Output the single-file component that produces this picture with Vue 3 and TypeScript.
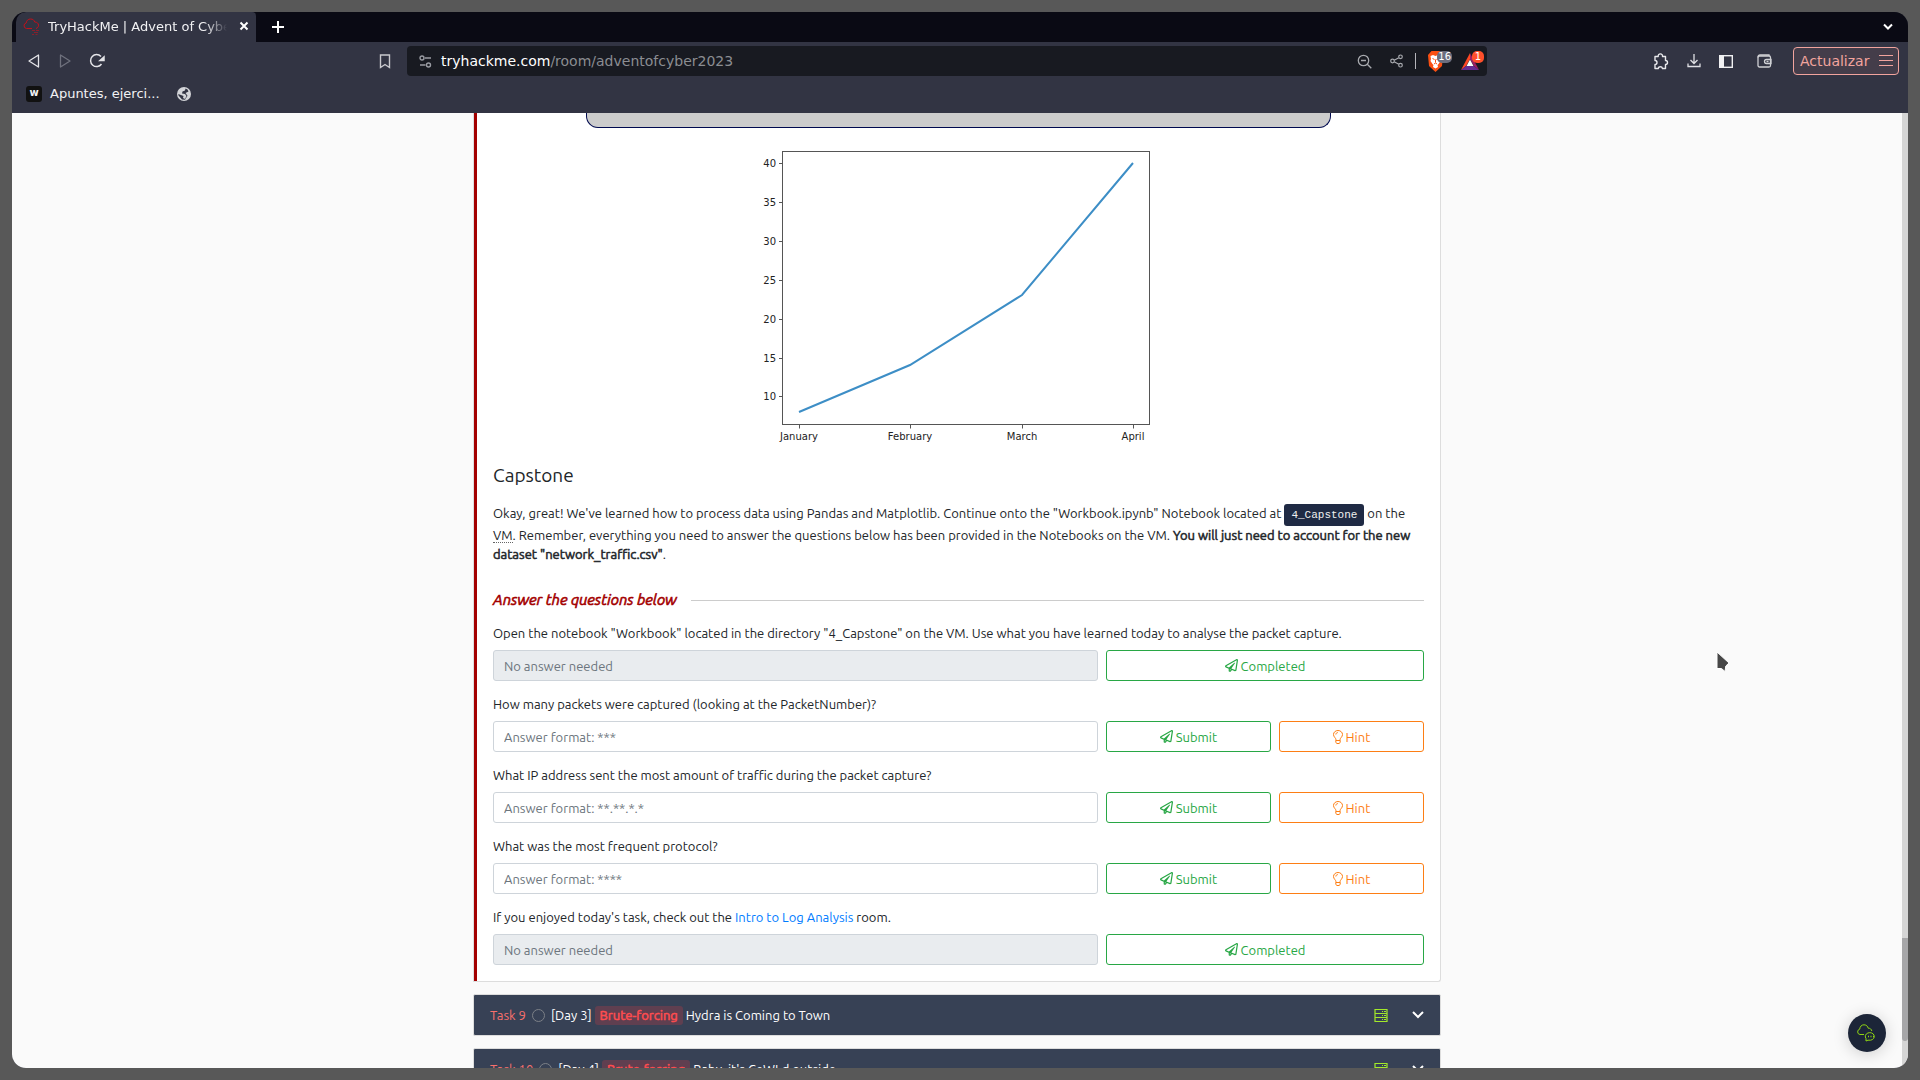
<script setup lang="ts">
interface Question {
  id: string
  text: string
  link?: string
  tail?: string
  placeholder: string
  done: boolean
}

interface Task {
  label: string
  day: string
  tag: string
  title: string
}

interface Point {
  month: string
  value: number
}

const questions: Question[] = [
  {
    id: 'q1',
    text: 'Open the notebook "Workbook" located in the directory "4_Capstone" on the VM. Use what you have learned today to analyse the packet capture.',
    placeholder: 'No answer needed',
    done: true,
  },
  { id: 'q2', text: 'How many packets were captured (looking at the PacketNumber)?', placeholder: 'Answer format: ***', done: false },
  { id: 'q3', text: 'What IP address sent the most amount of traffic during the packet capture?', placeholder: 'Answer format: **.**.*.*', done: false },
  { id: 'q4', text: 'What was the most frequent protocol?', placeholder: 'Answer format: ****', done: false },
  { id: 'q5', text: "If you enjoyed today's task, check out the ", link: 'Intro to Log Analysis', tail: ' room.', placeholder: 'No answer needed', done: true },
]

const tasks: Task[] = [
  { label: 'Task 9', day: '[Day 3]', tag: 'Brute-forcing', title: 'Hydra is Coming to Town' },
  { label: 'Task 10', day: '[Day 4]', tag: 'Brute-forcing', title: "Baby, it's CeWLd outside" },
]

const points: Point[] = [
  { month: 'January', value: 8 },
  { month: 'February', value: 14 },
  { month: 'March', value: 23 },
  { month: 'April', value: 40 },
]
const yTicks = [40, 35, 30, 25, 20, 15, 10]

const xAt = (i: number): number => Math.round(56 + i * 111.3)
const yAt = (v: number): number => Math.round(22 + (40 - v) * 7.78)
const line = points.map((p, i) => `${xAt(i)},${yAt(p.value)}`).join(' ')
</script>

<template>
  <div class="desktop">
    <div class="window">
      <header class="tabstrip">
        <div class="tab">
          <svg class="favicon" width="17" height="17" viewBox="0 0 17 17" fill="none" stroke="#c1121c">
            <path d="M9 10.500H3.500a2.800 2.800 0 0 1-.3-5.500C3.500 2.500 5 1 7.500 1s3.500 1 4.200 3c2.300 0 3.800 1.300 3.800 3.200 0 1.800-1 2.800-2.500 3.300" />
            <path d="M9 12.500h3M13 12.500h3M11 14.500h4M9 16.500h2M12.500 16.500h2" stroke-width="1" opacity=".6" />
          </svg>
          <span class="tab-title">TryHackMe | Advent of Cyber</span>
          <button class="icon-btn" aria-label="Close tab">
            <svg width="10" height="10" viewBox="0 0 10 10" stroke="#fff" stroke-width="2"><path d="M1.500 1.500l7 7M8.500 1.500l-7 7" /></svg>
          </button>
        </div>
        <button class="icon-btn new-tab" aria-label="New tab">
          <svg width="12" height="12" viewBox="0 0 12 12" stroke="#fff" stroke-width="2"><path d="M6 0v12M0 6h12" /></svg>
        </button>
        <button class="icon-btn tab-search" aria-label="Search tabs">
          <svg width="10" height="8" viewBox="0 0 10 8" fill="none" stroke="#fff" stroke-width="2"><path d="M1 1.500l4 4 4-4" /></svg>
        </button>
      </header>

      <nav class="toolbar">
        <div class="nav-left">
          <button class="icon-btn" aria-label="Back">
            <svg width="14" height="16" viewBox="0 0 14 16" fill="none" stroke="#e4e4e8" stroke-width="1.300" stroke-linejoin="round"><path d="M11.500 2v12L2 8z" /></svg>
          </button>
          <button class="icon-btn" aria-label="Forward">
            <svg width="14" height="16" viewBox="0 0 14 16" fill="none" stroke="#6f717d" stroke-width="1.300" stroke-linejoin="round"><path d="M2.500 2v12L12 8z" /></svg>
          </button>
          <button class="icon-btn" aria-label="Reload">
            <svg width="16" height="16" viewBox="0 0 16 16" fill="none" stroke="#e4e4e8" stroke-width="1.500"><path d="M12 3.500A6 6 0 1 0 12.500 11" /><path d="M15 4v3.500h-4z" fill="#e4e4e8" /></svg>
          </button>
          <button class="icon-btn bookmark" aria-label="Bookmark this page">
            <svg width="12" height="15" viewBox="0 0 12 15" fill="none" stroke="#c9c9ce" stroke-width="1.400"><path d="M1.500 1h9v12.500L6 10.500l-4.500 3z" /></svg>
          </button>
        </div>

        <div class="urlbar">
          <svg width="13" height="13" viewBox="0 0 13 13" fill="none" stroke="#9a9ca3" stroke-width="1.400"><circle cx="3" cy="3" r="2" /><path d="M6 3h6M1 10h5.500" /><circle cx="9.500" cy="10" r="2" /></svg>
          <div class="url" role="textbox" aria-label="Address">tryhackme.com<span>/room/adventofcyber2023</span></div>
          <button class="icon-btn" aria-label="Zoom out">
            <svg width="15" height="15" viewBox="0 0 15 15" fill="none" stroke="#a6a8ad" stroke-width="1.300"><circle cx="6.500" cy="6.500" r="5.200" /><path d="M4 6.500h5M10.300 10.300l4 4" /></svg>
          </button>
          <button class="icon-btn" aria-label="Share">
            <svg width="13" height="14" viewBox="0 0 13 14" fill="none" stroke="#a6a8ad" stroke-width="1.200"><circle cx="2.500" cy="7" r="1.800" /><circle cx="10.500" cy="2.800" r="1.800" /><circle cx="10.500" cy="11.200" r="1.800" /><path d="M4.200 6.200l4.600-2.500M4.200 7.800l4.600 2.500" /></svg>
          </button>
          <i class="divider"></i>
          <button class="icon-btn shield" aria-label="Brave Shields">
            <svg width="15" height="21" viewBox="0 0 15 21"><path d="M3.500 0h8L15 4l-1 11-6.500 6L1 15 0 4z" fill="#fb5012" /><path d="M2.500 5l2.500-1 2.500 1 2.500-1 2.500 1-.500 3 .500 2-2 3-1 1 .500 2-2.500 1.500L5 16l.500-2-1-1-2-3 .500-2z" fill="#fff" /><path d="M4.500 7.500l2 1M10.500 7.500l-2 1M7.500 8.500v3M6 13l1.500-1L9 13" stroke="#fb5012" fill="none" /></svg>
            <span class="badge grey">16</span>
          </button>
          <button class="icon-btn rewards" aria-label="Brave Rewards">
            <svg width="18" height="17" viewBox="0 0 18 17"><path d="M9 0v6l-4 7-5 4z" fill="#ff4724" /><path d="M0 17l5-4h8l5 4z" fill="#662d91" /><path d="M9 0v6l4 7 5 4z" fill="#9e1f63" /><path d="M9 6.500L5.500 13h7z" fill="#fff" /></svg>
            <span class="badge red">1</span>
          </button>
        </div>

        <div class="nav-right">
          <button class="icon-btn" aria-label="Extensions">
            <svg width="16" height="17" viewBox="0 0 16 17" fill="none" stroke="#e8e8ec" stroke-width="1.400" stroke-linejoin="round"><path d="M2 3.500h3.200a2.200 2.200 0 1 1 4.300 0h3v4a2 2 0 1 1 0 4v4H9.500a2.200 2.200 0 0 0-4.300 0H2v-4a2 2 0 0 0 0-4z" /></svg>
          </button>
          <button class="icon-btn" aria-label="Downloads">
            <svg width="14" height="14" viewBox="0 0 14 14" fill="none" stroke="#e0e0e5" stroke-width="1.300"><path d="M7 0v9M3.500 6L7 9.500 10.500 6M1 9.500v3h12v-3" /></svg>
          </button>
          <button class="icon-btn" aria-label="Sidebar">
            <svg width="14" height="13" viewBox="0 0 14 13"><rect x=".7" y=".7" width="12.600" height="11.600" fill="none" stroke="#f0f0f2" stroke-width="1.400" /><path d="M0 0h5v13H0z" fill="#f0f0f2" /></svg>
          </button>
          <button class="icon-btn wallet" aria-label="Wallet">
            <svg width="15" height="14" viewBox="0 0 15 14" fill="none" stroke="#cfd0d4" stroke-width="1.300"><rect x="1" y="2" width="12.500" height="11" rx="1.500" /><path d="M1 3.500C1 1.500 2 1 3 1h9v1M14 5.500H9.500a2 2 0 0 0 0 4H14z" /><path d="M9.500 7.500h2" /></svg>
          </button>
          <button class="update">
            <span>Actualizar</span>
            <svg width="14" height="12" viewBox="0 0 14 12" stroke="#f2a49e"><path d="M0 .5h14M0 5.500h14M0 10.500h14" /></svg>
          </button>
        </div>
      </nav>

      <nav class="bookmarks">
        <a href="#" class="bm"><span class="bm-icon">w</span>Apuntes, ejerci...</a>
        <a href="#" class="bm" aria-label="Bookmark">
          <svg width="14" height="14" viewBox="0 0 14 14"><circle cx="7" cy="7" r="7" fill="#d3d4d8" /><path d="M8.500 1.500L8 3.500 5.500 4.500 5 6.500l3 .5 1.500 2L8 12l-2-1 .5-2L1.300 7 1.500 8.500 5 12.500l3 .3 2.500-4L8.500 6l3-1.500L10.500 2.500z" fill="#323443" /></svg>
        </a>
      </nav>

      <div class="viewport">
        <main class="page">
          <article class="card">
            <div class="panel"></div>

            <figure class="chart">
              <svg width="432" height="310" viewBox="0 0 432 310" role="img" aria-label="Line chart by month">
                <rect class="axis" x="39.500" y="10.500" width="367" height="273" />
                <g v-for="t in yTicks" :key="t">
                  <path class="axis" :d="`M36 ${yAt(t)}.5h3.500`" />
                  <text x="33" :y="yAt(t) + 4" text-anchor="end">{{ t }}</text>
                </g>
                <g v-for="(p, i) in points" :key="p.month">
                  <path class="axis" :d="`M${xAt(i)}.5 284v3.500`" />
                  <text :x="xAt(i)" y="299" text-anchor="middle">{{ p.month }}</text>
                </g>
                <polyline :points="line" />
              </svg>
            </figure>

            <h3>Capstone</h3>
            <p class="lead">
              Okay, great! We've learned how to process data using Pandas and Matplotlib. Continue onto the "Workbook.ipynb" Notebook located at
              <code>4_Capstone</code> on the <abbr title="Virtual Machine">VM</abbr>. Remember, everything you need to answer the questions below has been provided in the Notebooks on the VM. <strong>You will just need to account for the new dataset "network_traffic.csv"</strong>.
            </p>

            <div class="section"><h4>Answer the questions below</h4><hr /></div>

            <form v-for="q in questions" :key="q.id" class="question" @submit.prevent>
              <label :for="q.id">{{ q.text }}<a v-if="q.link" href="#">{{ q.link }}</a>{{ q.tail }}</label>
              <div class="row">
                <input :id="q.id" type="text" :placeholder="q.placeholder" :disabled="q.done" />
                <div class="actions">
                  <button class="btn green" type="submit">
                    <svg width="13" height="13" viewBox="0 0 512 512" fill="currentColor"><path d="M440 6.500L24 246.400c-34.400 19.900-31.100 70.800 5.700 85.900L144 379.600V464c0 46.400 59.200 65.500 86.600 28.600l43.800-59.100 111.900 46.200c5.900 2.400 12.100 3.600 18.300 3.600 8.200 0 16.300-2.100 23.600-6.200 12.800-7.200 21.600-20 23.900-34.500l59.400-387.200c6.100-40.100-36.900-68.800-71.500-48.900zM192 464v-64.600l36.600 15.100L192 464zm212.600-28.700l-153.800-63.500L391 169.500c10.700-15.500-9.500-33.500-23.700-21.200L155.800 332.600 48 288 464 48l-59.400 387.300z" /></svg>
                    {{ q.done ? 'Completed' : 'Submit' }}
                  </button>
                  <button v-if="!q.done" class="btn orange" type="button">
                    <svg width="10" height="14" viewBox="0 0 10 14" fill="none" stroke="currentColor"><path d="M3 10.500V9.800C3 8 .5 7 .5 4.500a4.500 4 0 0 1 9 0C9.500 7 7 8 7 9.800v.700M2.800 10.500h4.400v2L6 13.500H4l-1.200-1zM2.800 4.500c0-1 .8-1.900 2-1.900" /></svg>
                    Hint
                  </button>
                </div>
              </div>
            </form>
          </article>

          <section v-for="t in tasks" :key="t.label" class="task">
            <span class="task-no">{{ t.label }}</span>
            <i class="ring"></i>
            <span>{{ t.day }}</span>
            <span class="tag">{{ t.tag }}</span>
            <span class="task-title">{{ t.title }}</span>
            <svg class="server" width="14" height="13" viewBox="0 0 14 13" fill="none" stroke="#a3ea2a"><path d="M1 .5h12v12H1zM1 4.500h12M1 8.500h12" stroke-width="1.200" /><path d="M8 2.500h1M10 2.500h2M8 6.500h1M10 6.500h2M8 10.500h1M10 10.500h2" /></svg>
            <button class="icon-btn" :aria-label="`Expand ${t.label}`">
              <svg width="12" height="8" viewBox="0 0 12 8" fill="none" stroke="#fff" stroke-width="2"><path d="M1 1l5 5 5-5" /></svg>
            </button>
          </section>
        </main>
        <div class="scroll"><div class="thumb"></div></div>
      </div>

      <button class="chat" aria-label="Open chat">
        <svg width="20" height="18" viewBox="0 0 20 18" fill="none" stroke="#8fd414"><path d="M7 10.500H3a2.700 2.700 0 0 1-.3-5.300C3 2.500 4.500.8 7 .8s3.800 1.600 4.200 3.400c2 0 3.300 1 3.600 2.800" /><path d="M9 17v-2.500a4.500 3.800 0 1 1 4.500 1.700H11z" /><path d="M11 12.500h1M13.500 12.500h1M16 12.500h1" stroke-width="1.500" /></svg>
      </button>

      <svg class="cursor" width="14" height="22" viewBox="0 0 14 22"><path d="M1 1v16.500h4.500l3.500 3 .8-5.500 3.200-3z" fill="#474747" stroke="#fff" /></svg>
    </div>
  </div>
</template>

<style>
body {
  margin: 0;
}
</style>

<style scoped>
* {
  box-sizing: border-box;
}
button {
  font: inherit;
  cursor: pointer;
}
svg {
  display: block;
  flex: none;
}
.desktop {
  height: 100vh;
  padding: 12px;
  background: #585858;
  font-family: Ubuntu, "Noto Sans", sans-serif;
  font-size: 13px;
}
.window {
  position: relative;
  display: flex;
  flex-direction: column;
  height: 100%;
  overflow: hidden;
  border-radius: 14px;
  background: #323443;
  color: #f1f1f3;
}
.icon-btn {
  position: relative;
  display: flex;
  padding: 0;
  border: 0;
  background: none;
}
.tabstrip {
  display: flex;
  align-items: center;
  height: 30px;
  padding: 0 15px 0 4px;
  background: #0a0a14;
  font-family: "DejaVu Sans", sans-serif;
}
.tab {
  display: flex;
  align-items: center;
  gap: 8px;
  width: 240px;
  height: 30px;
  padding: 0 7px 2px;
  border-radius: 10px 4px 0 0;
  background: #323443;
}
.tab-title {
  flex: 1;
  overflow: hidden;
  white-space: nowrap;
  margin-right: 4px;
  mask-image: linear-gradient(90deg, #000 88%, transparent);
}
.new-tab {
  margin-left: 16px;
}
.tab-search {
  margin-left: auto;
}
.toolbar {
  display: grid;
  grid-template-columns: 395fr 1080fr 421fr;
  align-items: center;
  height: 38px;
  font-family: "DejaVu Sans", sans-serif;
  font-size: 14px;
}
.nav-left {
  display: flex;
  align-items: center;
  gap: 17px;
  padding: 0 16px 0 15px;
}
.bookmark {
  margin-left: auto;
}
.urlbar {
  display: flex;
  align-items: center;
  gap: 12px;
  height: 30px;
  padding: 0 8px 0 12px;
  border-radius: 4px;
  background: #181a21;
}
.url {
  flex: 1;
  margin-left: -3px;
  color: #fff;
}
.url span {
  color: #8b8d92;
}
.urlbar .icon-btn + .icon-btn {
  margin-left: 6px;
}
.divider {
  width: 1px;
  height: 16px;
  background: #b5b5ba;
}
.urlbar .rewards {
  margin-left: 8px;
}
.badge {
  position: absolute;
  top: 0;
  right: -9px;
  min-width: 12px;
  padding: 0 1px;
  border-radius: 5px;
  color: #fff;
  font-size: 10px;
  line-height: 12px;
  text-align: center;
}
.rewards .badge {
  right: -5px;
  top: -2px;
}
.grey {
  background: #6b6e7e;
}
.red {
  background: #ff4f2b;
}
.nav-right {
  display: flex;
  align-items: center;
  justify-content: flex-end;
  gap: 18px;
  padding-right: 9px;
}
.wallet {
  margin-left: 6px;
}
.update {
  display: flex;
  align-items: center;
  justify-content: space-between;
  gap: 8px;
  width: 106px;
  height: 28px;
  margin-left: 3px;
  padding: 0 5px 0 6px;
  border: 1px solid #f2a49e;
  border-radius: 4px;
  background: #443d4a;
  color: #f2a49e;
}
.bookmarks {
  display: flex;
  align-items: center;
  gap: 17px;
  height: 33px;
  padding: 0 14px 6px;
  font-family: "DejaVu Sans", sans-serif;
}
.bm {
  display: flex;
  align-items: center;
  gap: 8px;
  color: inherit;
  text-decoration: none;
}
.bm-icon {
  width: 16px;
  height: 16px;
  border-radius: 3px;
  background: #111;
  font-size: 10px;
  font-weight: 700;
  line-height: 14px;
  text-align: center;
}
.viewport {
  display: flex;
  flex: 1;
  min-height: 0;
  background: #fafafa;
  color: #212529;
}
.page {
  flex: 1;
  overflow: hidden;
}
.scroll {
  display: flex;
  flex-direction: column;
  justify-content: flex-end;
  width: 6px;
  padding-bottom: 27px;
  background: #d5d5d5;
}
.thumb {
  height: 103px;
  border-radius: 0 0 3px 3px;
  background: #a6a6a8;
}
.card {
  max-width: 968px;
  margin: 0 auto 12px;
  padding: 0 16px 16px 19px;
  border: 1px solid #ddd;
  border-top: 0;
  border-radius: 0 0 3px 0;
  background: #fff;
  box-shadow: inset 3px 0 #a30000;
}
.panel {
  width: 80%;
  height: 15px;
  margin: 0 auto;
  border: 1px solid #000a4f;
  border-top: 0;
  border-radius: 0 0 12px 12px;
  background: #ccc;
}
.chart {
  display: flex;
  justify-content: center;
  margin: 13px 0 12px;
}
.chart text {
  fill: #222;
  font-family: "DejaVu Sans", sans-serif;
  font-size: 10px;
}
.chart .axis {
  fill: none;
  stroke: #555;
}
.chart polyline {
  fill: none;
  stroke: #3d8ec6;
  stroke-width: 2;
}
h3 {
  margin: 0 0 17px;
  font-size: 19px;
  font-weight: 400;
  line-height: 24px;
}
.lead {
  margin: 0;
  line-height: 19px;
}
code {
  display: inline-block;
  padding: 0 7px;
  border-radius: 3px;
  background: #1f2a44;
  color: #f0f0f0;
  font-family: "Liberation Mono", monospace;
  font-size: 11px;
  line-height: 22px;
}
abbr {
  border-bottom: 1px dotted #666;
  text-decoration: none;
}
/* Emphasis is drawn as a thickened regular weight */
strong,
h4,
.tag {
  font-weight: 400;
  -webkit-text-stroke: 0.04em currentColor;
}
.section {
  display: flex;
  align-items: center;
  gap: 14px;
  margin: 26px 0 13px;
}
h4 {
  margin: 0;
  color: #a30000;
  font-size: 15px;
  font-style: italic;
  line-height: 20px;
}
hr {
  flex: 1;
  margin: 0;
  border: 0;
  border-top: 1px solid #ccc;
}
.question {
  margin-bottom: 13px;
}
.question:last-child {
  margin-bottom: 0;
}
label {
  display: block;
  margin-bottom: 7px;
  line-height: 20px;
}
label a {
  color: #007bff;
  text-decoration: none;
}
.row {
  display: grid;
  grid-template-columns: 605fr 318fr;
  gap: 8px;
}
input {
  width: 100%;
  height: 31px;
  padding: 0 10px;
  border: 1px solid #ced4da;
  border-radius: 3px;
  background: #fff;
  font: inherit;
}
input::placeholder {
  color: #6c757d;
  opacity: 1;
}
input:disabled {
  background: #e9ecef;
}
.actions {
  display: flex;
  gap: 8px;
}
.btn {
  display: flex;
  flex: 165;
  align-items: center;
  justify-content: center;
  gap: 3px;
  height: 31px;
  padding: 0;
  border: 1px solid currentColor;
  border-radius: 3px;
  background: #fff;
}
.green {
  color: #28a745;
}
.orange {
  flex: 145;
  color: #fd7e14;
}
.task {
  display: flex;
  align-items: center;
  max-width: 968px;
  height: 42px;
  margin: 0 auto 12px;
  padding: 0 16px;
  border: 1px solid #ddd;
  border-radius: 2px;
  background: #374155;
  color: #fff;
}
.task-no {
  color: #f8706c;
}
.ring {
  width: 13px;
  height: 13px;
  margin: 0 6px;
  border: 1px solid #7c8087;
  border-radius: 50%;
}
.tag {
  margin: 0 3px;
  padding: 0 5px;
  border-radius: 3px;
  background: #603f50;
  color: #ff4d4f;
  line-height: 19px;
}
.task-title {
  flex: 1;
}
.server {
  margin-right: 24px;
}
.chat {
  position: absolute;
  right: 22px;
  bottom: 16px;
  display: flex;
  align-items: center;
  justify-content: center;
  width: 38px;
  height: 38px;
  padding: 0;
  border: 0;
  border-radius: 50%;
  background: #1c2538;
  box-shadow: 0 2px 16px rgba(0, 0, 0, 0.18);
}
.cursor {
  position: absolute;
  left: 1704px;
  top: 639px;
}
</style>
